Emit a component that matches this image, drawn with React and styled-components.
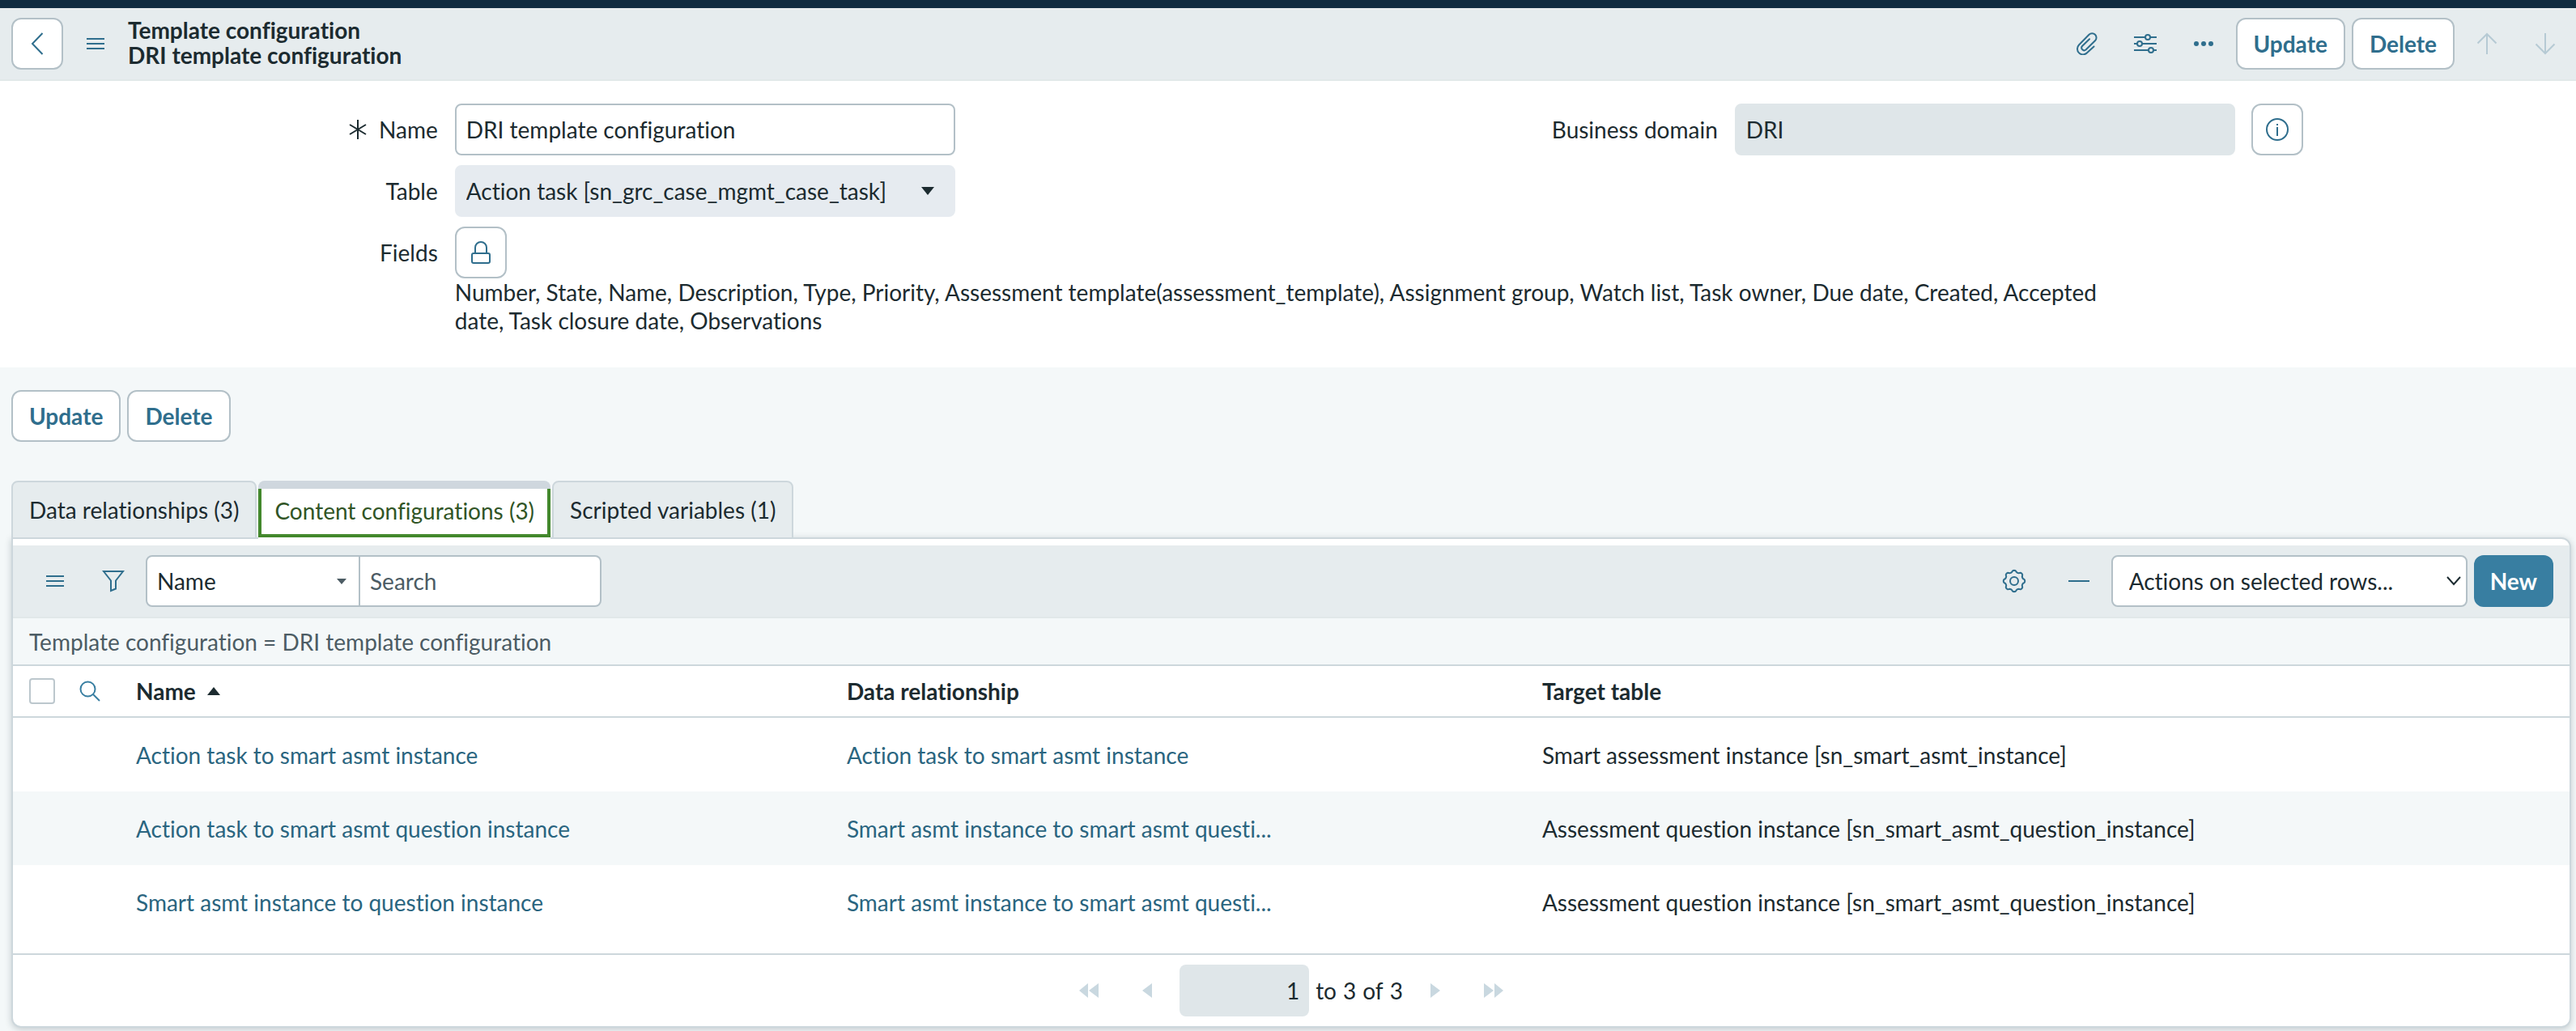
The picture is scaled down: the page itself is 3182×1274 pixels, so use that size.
import { useState } from 'react';
import styled, { createGlobalStyle, css } from 'styled-components';

const colors = {
  text: '#1c2b30',
  muted: '#4c5c64',
  link: '#2a6580',
  action: '#2f6e8d',
  primary: '#387ea1',
  border: '#b3c0c7',
  line: '#cdd7dc',
  bar: '#e6ecee',
  page: '#f4f8f9',
  readonly: '#dfe6e9',
  disabled: '#c9d8e0',
  disabledDark: '#b6cad4',
  navy: '#102c41',
  green: '#43882c',
  greenText: '#315526',
};

const GlobalStyle = createGlobalStyle`
  *, *::before, *::after {
    box-sizing: border-box;
  }

  body {
    margin: 0;
    background: ${colors.page};
    color: ${colors.text};
    font-family: Lato, 'Liberation Sans', sans-serif;
    font-size: 28px;
    line-height: 36px;
    font-variant-ligatures: none;
  }

  button, input, select {
    font: inherit;
    font-variant-ligatures: none;
    color: inherit;
    margin: 0;
  }
`;

const Header = styled.header`
  display: flex;
  align-items: center;
  gap: 8px;
  padding: 12px 6px 12px 14px;
  background: ${colors.bar};
  border-top: 10px solid ${colors.navy};
  border-bottom: 2px solid #e1e8e9;
`;

const Title = styled.h1`
  flex: 1;
  margin: 0;
  padding-bottom: 2px;
  font-size: 28px;
  line-height: 31px;
  font-weight: 700;

  span {
    display: block;
  }
`;

const Button = styled.button`
  height: 64px;
  padding: 0 20px;
  border: 2px solid ${colors.border};
  border-radius: 12px;
  background: #ffffff;
  color: ${colors.action};
  font-weight: 700;
  cursor: pointer;

  ${({ $primary }) =>
    $primary &&
    css`
      border: 0;
      background: ${colors.primary};
      color: #ffffff;
    `}
`;

const IconButton = styled.button`
  display: inline-flex;
  align-items: center;
  justify-content: center;
  flex: none;
  width: 64px;
  height: 64px;
  padding: 0;
  border: 2px solid ${({ $framed }) => ($framed ? colors.border : 'transparent')};
  border-radius: 12px;
  background: ${({ $framed }) => ($framed ? '#ffffff' : 'transparent')};
  color: ${colors.action};
  cursor: pointer;

  &:disabled {
    color: ${({ $onBar }) => ($onBar ? colors.disabledDark : colors.disabled)};
    cursor: default;
  }
`;

const Form = styled.form`
  display: grid;
  grid-template-columns: 1fr 1fr;
  row-gap: 12px;
  padding: 28px 10px 40px;
  background: #ffffff;
`;

const Field = styled.div`
  display: grid;
  grid-template-columns: 34.9% 39.1% 1fr;
  align-items: center;
  grid-column: ${({ $column }) => $column};
`;

const Label = styled.label`
  display: flex;
  align-items: center;
  justify-content: flex-end;
  gap: 14px;
  padding-right: 21px;
`;

const TextInput = styled.input`
  width: 100%;
  height: 64px;
  padding: 0 12px;
  border: 2px solid ${colors.border};
  border-radius: 8px;
  background: #ffffff;

  &:read-only {
    border-color: ${colors.readonly};
    background: ${colors.readonly};
  }
`;

const AddOn = styled.div`
  padding-left: 20px;
`;

const FieldsValue = styled.p`
  grid-column: 1 / -1;
  width: 65%;
  margin: -12px 0 0 17.45%;
  line-height: 35px;
`;

const SelectBox = styled.div`
  display: grid;
  align-items: center;
  width: ${({ $width }) => $width || '100%'};

  > * {
    grid-area: 1 / 1;
  }

  > svg {
    justify-self: end;
    margin-right: ${({ $caretGap }) => $caretGap};
    pointer-events: none;
  }
`;

const Select = styled.select`
  appearance: none;
  width: 100%;
  height: 64px;
  padding: 0 48px 0 ${({ $indent }) => $indent || '12px'};
  border: 2px solid ${colors.border};
  border-radius: ${({ $joined }) => ($joined ? '8px 0 0 8px' : '8px')};
  background: #ffffff;

  ${({ $flat }) =>
    $flat &&
    css`
      border-color: #e6ebf0;
      background: #e6ebf0;
    `}
`;

const FormActions = styled.div`
  display: flex;
  gap: 8px;
  padding: 28px 14px 48px;
`;

const RelatedLists = styled.section`
  padding: 0 6px 4px 14px;
`;

const TabList = styled.div`
  position: relative;
  z-index: 1;
  display: flex;
  gap: 2px;
  margin-bottom: -2px;
`;

const Tab = styled.button`
  height: 72px;
  padding: 0 20px;
  border: 2px solid ${colors.line};
  border-radius: 8px 8px 0 0;
  background: ${colors.bar};
  cursor: pointer;

  &[aria-selected='true'] {
    padding: 0 20px 6px;
    border-width: 10px 0 2px;
    border-color: #cfd7de transparent #ffffff;
    background: #ffffff;
    color: ${colors.greenText};
    box-shadow: inset 4px 0 ${colors.green}, inset -4px 0 ${colors.green},
      inset 0 -4px ${colors.green};
  }
`;

const Panel = styled.div`
  padding-top: 8px;
  border: 2px solid ${colors.line};
  border-radius: 0 12px 12px 12px;
  background: #ffffff;
  box-shadow: 0 2px 8px rgba(20, 40, 50, 0.22);
`;

const Toolbar = styled.div`
  display: flex;
  align-items: center;
  justify-content: space-between;
  padding: 12px 20px;
  background: ${colors.bar};
  border-bottom: 2px solid #e1e8e9;
`;

const ToolGroup = styled.div`
  display: flex;
  align-items: center;
  gap: ${({ $gap }) => $gap || '8px'};
`;

const SearchGroup = styled.div`
  display: flex;
`;

const SearchInput = styled.input`
  width: 298px;
  height: 64px;
  padding: 0 12px;
  border: 2px solid ${colors.border};
  border-left: 0;
  border-radius: 0 8px 8px 0;
  background: #ffffff;

  &::placeholder {
    color: ${colors.muted};
    opacity: 1;
  }
`;

const Breadcrumb = styled.div`
  display: flex;
  align-items: center;
  height: 57px;
  padding: 0 20px;
  background: ${colors.page};
  color: ${colors.muted};
`;

const Table = styled.table`
  width: 100%;
  margin-bottom: 18px;
  table-layout: fixed;
  border-collapse: separate;
  border-spacing: 0;
  text-align: left;
`;

const HeadCell = styled.th`
  width: ${({ $width }) => $width};
  height: 66px;
  padding: 0 0 0 ${({ $indent }) => $indent || '0'};
  border-top: 2px solid ${colors.line};
  border-bottom: 2px solid ${colors.line};
  font-weight: 700;
`;

const SortLink = styled.a`
  display: inline-flex;
  align-items: center;
  gap: 14px;
  color: inherit;
  text-decoration: none;
`;

const Row = styled.tr`
  &:nth-child(even) {
    background: ${colors.page};
  }
`;

const Cell = styled.td`
  height: 91px;
  padding: 0;
`;

const RecordLink = styled.a`
  color: ${colors.link};
  text-decoration: none;
`;

const Checkbox = styled.input`
  appearance: none;
  display: block;
  width: 32px;
  height: 32px;
  border: 2px solid #bcc7cd;
  border-radius: 4px;
  background: #ffffff;
`;

const SearchToggle = styled.button`
  display: flex;
  padding: 0;
  border: 0;
  background: none;
  color: ${colors.primary};
  cursor: pointer;
`;

const Pager = styled.nav`
  display: flex;
  align-items: center;
  justify-content: center;
  gap: 8px;
  padding: 12px 0;
  border-top: 2px solid ${colors.line};
`;

const PageInput = styled.input`
  width: 160px;
  height: 64px;
  padding: 0 12px;
  border: 0;
  border-radius: 8px;
  background: ${colors.readonly};
  text-align: right;
`;

const PageRange = styled.div`
  display: flex;
  gap: 8px;
`;

const Icon = ({ w, h, stroke = 2, children }) => (
  <svg
    width={w}
    height={h}
    viewBox={`0 0 ${w} ${h}`}
    fill="none"
    stroke="currentColor"
    strokeWidth={stroke}
    aria-hidden="true"
  >
    {children}
  </svg>
);

const BackIcon = () => (
  <Icon w={16} h={28}><path d="M14.5 1 2 14l12.5 13" /></Icon>
);

const MenuIcon = () => (
  <Icon w={22} h={14}><path d="M0 1h22M0 7h22M0 13h22" /></Icon>
);

const ClipIcon = () => (
  <Icon w={26} h={28}>
    <path
      strokeLinecap="round"
      d="M21.5 17.5 13 25.3A7 7 0 0 1 3 15.5L15.5 2.8A5.3 5.3 0 0 1 23 10.3L11.5 21.5A3.2 3.2 0 0 1 7 17L16 8.3"
    />
  </Icon>
);

const SlidersIcon = () => (
  <Icon w={28} h={26}>
    <path d="M0 5h14M20 5h8M0 13h4M10 13h18M0 21h18M24 21h4" />
    <circle cx="17" cy="5" r="3" />
    <circle cx="7" cy="13" r="3" />
    <circle cx="21" cy="21" r="3" />
  </Icon>
);

const DotsIcon = () => (
  <svg width="24" height="8" viewBox="0 0 24 8" fill="currentColor" aria-hidden="true">
    <circle cx="3" cy="4" r="3" />
    <circle cx="12" cy="4" r="3" />
    <circle cx="21" cy="4" r="3" />
  </svg>
);

const UpIcon = () => (
  <Icon w={26} h={28}><path d="M13 27V2M1.5 13.5 13 2l11.5 11.5" /></Icon>
);

const DownIcon = () => (
  <Icon w={26} h={28}><path d="M13 1v25M1.5 14.5 13 26l11.5-11.5" /></Icon>
);

const RequiredIcon = () => (
  <Icon w={24} h={26}><path d="M12 1v24M2 7l20 12M22 7 2 19" /></Icon>
);

const InfoIcon = () => (
  <Icon w={28} h={28}>
    <circle cx="14" cy="14" r="13" />
    <path d="M14 11v11M14 7v2" />
  </Icon>
);

const LockIcon = () => (
  <Icon w={24} h={28}>
    <rect x="1" y="15" width="22" height="12" rx="2" />
    <path d="M5 15V8a7 7 0 0 1 14 0v7" />
  </Icon>
);

const FilterIcon = () => (
  <Icon w={28} h={28}>
    <path d="M2 2h24L17 13.5v10L11 26V13.5z" />
  </Icon>
);

// eight soft teeth around the hub
const gearPath = Array.from({ length: 97 }, (_, i) => {
  const angle = (i / 96) * Math.PI * 2;
  const wave = Math.cos(angle * 8);
  const r = 12.1 + 1.1 * Math.sign(wave) * Math.sqrt(Math.abs(wave));
  const x = (15 + r * Math.sin(angle)).toFixed(2);
  const y = (15 - r * Math.cos(angle)).toFixed(2);
  return `${i ? 'L' : 'M'}${x} ${y}`;
}).join('');

const GearIcon = () => (
  <Icon w={30} h={30}>
    <path d={`${gearPath}z`} strokeLinejoin="round" />
    <circle cx="15" cy="15" r="5" />
  </Icon>
);

const MinusIcon = () => (
  <Icon w={26} h={4}><path d="M0 2h26" /></Icon>
);

const ChevronIcon = () => (
  <Icon w={18} h={12}><path d="m1 1 8 9 8-9" /></Icon>
);

const SearchIcon = () => (
  <Icon w={26} h={26}>
    <circle cx="10.5" cy="10.5" r="9" />
    <path d="m17 17 8 8" />
  </Icon>
);

const Triangle = ({ w, h, points, fill = 'currentColor' }) => (
  <svg width={w} height={h} viewBox={`0 0 ${w} ${h}`} fill={fill} aria-hidden="true">
    {points.map((p) => (
      <polygon key={p} points={p} />
    ))}
  </svg>
);

const tabs = [
  { id: 'relationships', label: 'Data relationships (3)' },
  { id: 'content', label: 'Content configurations (3)' },
  { id: 'variables', label: 'Scripted variables (1)' },
];

const rows = [
  {
    name: 'Action task to smart asmt instance',
    relationship: 'Action task to smart asmt instance',
    target: 'Smart assessment instance [sn_smart_asmt_instance]',
  },
  {
    name: 'Action task to smart asmt question instance',
    relationship: 'Smart asmt instance to smart asmt questi...',
    target: 'Assessment question instance [sn_smart_asmt_question_instance]',
  },
  {
    name: 'Smart asmt instance to question instance',
    relationship: 'Smart asmt instance to smart asmt questi...',
    target: 'Assessment question instance [sn_smart_asmt_question_instance]',
  },
];

const ConfigList = () => (
  <Panel role="tabpanel">
    <Toolbar>
      <ToolGroup>
        <IconButton type="button" aria-label="List controls"><MenuIcon /></IconButton>
        <IconButton type="button" aria-label="Show filter"><FilterIcon /></IconButton>
        <SearchGroup>
          <SelectBox $width="265px" $caretGap="17px">
            <Select aria-label="Search field" $joined>
              <option>Name</option>
              <option>Data relationship</option>
              <option>Target table</option>
            </Select>
            <Triangle w={12} h={8} fill={colors.muted} points={['0,1 12,1 6,8']} />
          </SelectBox>
          <SearchInput type="text" placeholder="Search" aria-label="Search" />
        </SearchGroup>
      </ToolGroup>
      <ToolGroup>
        <ToolGroup $gap="16px">
          <IconButton type="button" aria-label="Personalize list"><GearIcon /></IconButton>
          <IconButton type="button" aria-label="Collapse list"><MinusIcon /></IconButton>
        </ToolGroup>
        <SelectBox $width="440px" $caretGap="8px">
          <Select aria-label="Actions on selected rows" $indent="20px">
            <option>Actions on selected rows...</option>
            <option>Delete</option>
          </Select>
          <ChevronIcon />
        </SelectBox>
        <Button type="button" $primary>New</Button>
      </ToolGroup>
    </Toolbar>

    <Breadcrumb>Template configuration = DRI template configuration</Breadcrumb>

    <Table>
      <thead>
        <tr>
          <HeadCell $width="82px" $indent="20px">
            <Checkbox type="checkbox" aria-label="Select all rows" />
          </HeadCell>
          <HeadCell $width="70px">
            <SearchToggle type="button" aria-label="Show column search"><SearchIcon /></SearchToggle>
          </HeadCell>
          <HeadCell $width="27.8%" aria-sort="ascending">
            <SortLink href="#name">
              Name
              <Triangle w={16} h={10} points={['0,10 16,10 8,0']} />
            </SortLink>
          </HeadCell>
          <HeadCell $width="27.2%"><SortLink href="#relationship">Data relationship</SortLink></HeadCell>
          <HeadCell><SortLink href="#target">Target table</SortLink></HeadCell>
        </tr>
      </thead>
      <tbody>
        {rows.map((row) => (
          <Row key={row.name}>
            <Cell />
            <Cell />
            <Cell><RecordLink href="#record">{row.name}</RecordLink></Cell>
            <Cell><RecordLink href="#relationship">{row.relationship}</RecordLink></Cell>
            <Cell>{row.target}</Cell>
          </Row>
        ))}
      </tbody>
    </Table>

    <Pager aria-label="Pagination">
      <IconButton type="button" disabled aria-label="First page">
        <Triangle w={24} h={20} points={['11,1 11,19 0,10', '24,1 24,19 12,10']} />
      </IconButton>
      <IconButton type="button" disabled aria-label="Previous page">
        <Triangle w={12} h={20} points={['12,1 12,19 0,10']} />
      </IconButton>
      <PageInput type="text" defaultValue="1" readOnly aria-label="Skip to row" />
      <PageRange>
        <span>to</span>
        <span>3</span>
        <span>of</span>
        <span>3</span>
      </PageRange>
      <IconButton type="button" disabled aria-label="Next page">
        <Triangle w={12} h={20} points={['0,1 0,19 12,10']} />
      </IconButton>
      <IconButton type="button" disabled aria-label="Last page">
        <Triangle w={24} h={20} points={['0,1 0,19 12,10', '13,1 13,19 24,10']} />
      </IconButton>
    </Pager>
  </Panel>
);

const App = () => {
  const [activeTab, setActiveTab] = useState('content');

  return (
    <>
      <GlobalStyle />
      <Header>
        <IconButton type="button" $framed aria-label="Back"><BackIcon /></IconButton>
        <IconButton type="button" aria-label="Additional actions"><MenuIcon /></IconButton>
        <Title>
          <span>Template configuration</span>
          <span>DRI template configuration</span>
        </Title>
        <IconButton type="button" aria-label="Manage attachments"><ClipIcon /></IconButton>
        <IconButton type="button" aria-label="Personalize form"><SlidersIcon /></IconButton>
        <IconButton type="button" aria-label="More options"><DotsIcon /></IconButton>
        <Button type="button">Update</Button>
        <Button type="button">Delete</Button>
        <IconButton type="button" $onBar disabled aria-label="Previous record"><UpIcon /></IconButton>
        <IconButton type="button" $onBar disabled aria-label="Next record"><DownIcon /></IconButton>
      </Header>

      <Form>
        <Field $column="1">
          <Label htmlFor="name"><RequiredIcon />Name</Label>
          <TextInput id="name" type="text" defaultValue="DRI template configuration" />
        </Field>
        <Field $column="2">
          <Label htmlFor="domain">Business domain</Label>
          <TextInput id="domain" type="text" value="DRI" readOnly />
          <AddOn>
            <IconButton type="button" $framed aria-label="Preview record"><InfoIcon /></IconButton>
          </AddOn>
        </Field>
        <Field $column="1">
          <Label htmlFor="table">Table</Label>
          <SelectBox $caretGap="26px">
            <Select id="table" $flat>
              <option>Action task [sn_grc_case_mgmt_case_task]</option>
            </Select>
            <Triangle w={16} h={10} points={['0,0 16,0 8,10']} />
          </SelectBox>
        </Field>
        <Field $column="1">
          <Label htmlFor="fields">Fields</Label>
          <IconButton id="fields" type="button" $framed aria-label="Unlock Fields"><LockIcon /></IconButton>
        </Field>
        <FieldsValue>
          Number, State, Name, Description, Type, Priority, Assessment template(assessment_template),
          Assignment group, Watch list, Task owner, Due date, Created, Accepted date, Task closure
          date, Observations
        </FieldsValue>
      </Form>

      <FormActions>
        <Button type="button">Update</Button>
        <Button type="button">Delete</Button>
      </FormActions>

      <RelatedLists>
        <TabList role="tablist">
          {tabs.map((tab) => (
            <Tab
              key={tab.id}
              type="button"
              role="tab"
              aria-selected={tab.id === activeTab}
              onClick={() => setActiveTab(tab.id)}
            >
              {tab.label}
            </Tab>
          ))}
        </TabList>
        <ConfigList />
      </RelatedLists>
    </>
  );
};

export default App;
